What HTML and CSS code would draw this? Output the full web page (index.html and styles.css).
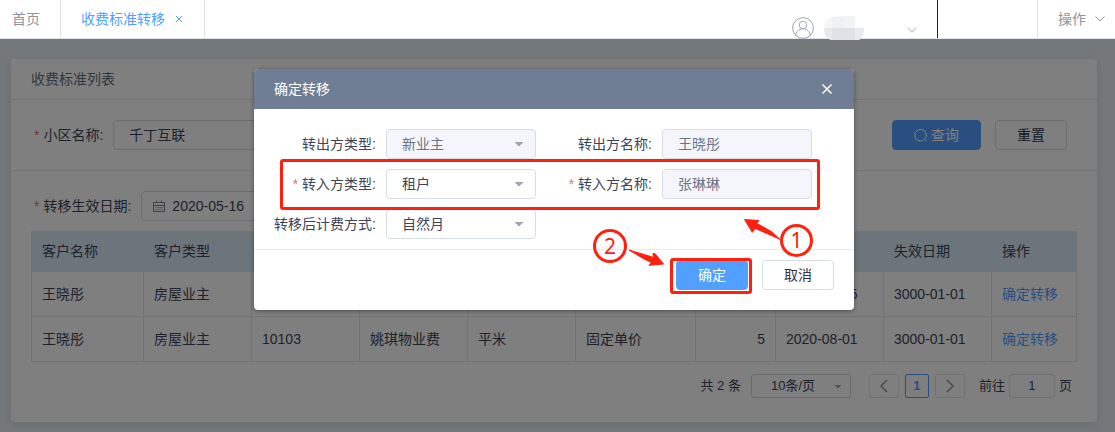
FILE: index.html
```
<!DOCTYPE html>
<html lang="zh-CN">
<head>
    <meta charset="UTF-8">
    <meta name="viewport" content="width=device-width, initial-scale=1.0">
    <title>收费标准转移</title>
    <link rel="stylesheet" href="styles.css">
</head>
<body>
    <header class="topbar">
        <nav class="tabs">
            <a class="tab" href="#">首页</a>
            <a class="tab active" href="#">收费标准转移
                <svg class="tab-close" width="8" height="8" viewBox="0 0 8 8"><path d="M1 1l6 6M7 1L1 7"/></svg>
            </a>
        </nav>
        <div class="user">
            <svg class="avatar" width="24" height="22" viewBox="0 0 24 22">
                <circle cx="12" cy="11" r="10.4"/>
                <circle cx="12" cy="8" r="3.8"/>
                <path d="M4.500 19c.4-4.600 3.500-7.200 7.500-7.200s7.100 2.600 7.500 7.200"/>
            </svg>
            <svg class="user-name" width="40" height="24" viewBox="0 0 40 24">
                <path d="M0 12C0 4 5 0 14 0h17v12z" fill="#f6f6f7"/>
                <path d="M8 1h12v11H8z" fill="#f0f1f3"/>
                <path d="M20 0h11v12H20z" fill="#f2f3f5"/>
                <path d="M0 12h40c0 6-2 10-5 12H7c-5-2-7-6-7-12z" fill="#e9eaed"/>
                <path d="M8 12h12v12H8zM20 12h11v12H20z" fill="#e0e2e7"/>
            </svg>
            <svg class="chevron light" width="10" height="6" viewBox="0 0 10 6"><path d="M1 1l4 4 4-4"/></svg>
        </div>
        <div class="spacer"></div>
        <button class="operate">操作
            <svg class="chevron" width="10" height="6" viewBox="0 0 10 6"><path d="M.5.500l4.500 4.500L9.500.5"/></svg>
        </button>
    </header>

    <main>
        <section class="card">
            <h1 class="card-title">收费标准列表</h1>

            <form class="search">
                <label class="required" for="community">小区名称:</label>
                <input class="field wide" type="text" id="community" value="千丁互联">
                <div class="search-buttons">
                    <button class="btn primary query" type="button">
                        <svg width="14" height="14" viewBox="0 0 14 14"><path d="M9.500 12.200A5.800 5.800 0 1 1 11.300 10.500M10 10.500l2.500 2.700"/></svg>查询
                    </button>
                    <button class="btn" type="button">重置</button>
                </div>
            </form>

            <div class="effective">
                <label class="required" for="effectiveDate">转移生效日期:</label>
                <div class="date-field">
                    <svg width="12" height="12" viewBox="0 0 12 12"><path d="M.5 2.500h11v9H.5zM.5 5.500h11M3.500.5v2M8.500.5v2"/><path d="M2.500 7.500h7M2.500 9.500h7" stroke-dasharray="1 1"/></svg>
                    <input type="text" id="effectiveDate" value="2020-05-16">
                </div>
            </div>

            <table class="list">
                <colgroup>
                    <col class="c-name"><col><col><col><col><col class="c-type"><col class="c-price"><col><col><col class="c-action">
                </colgroup>
                <thead>
                    <tr>
                        <th>客户名称</th><th>客户类型</th><th></th><th></th><th></th><th></th><th></th><th></th><th>失效日期</th><th>操作</th>
                    </tr>
                </thead>
                <tbody>
                    <tr>
                        <td>王晓彤</td><td>房屋业主</td><td></td><td></td><td></td><td></td><td></td><td>2020-05-15</td><td>3000-01-01</td><td><a href="#">确定转移</a></td>
                    </tr>
                    <tr>
                        <td>王晓彤</td><td>房屋业主</td><td>10103</td><td>姚琪物业费</td><td>平米</td><td>固定单价</td><td class="num">5</td><td>2020-08-01</td><td>3000-01-01</td><td><a href="#">确定转移</a></td>
                    </tr>
                </tbody>
            </table>

            <div class="pagination">
                <span class="total">共 2 条</span>
                <select class="page-size" aria-label="每页条数"><option>10条/页</option></select>
                <button class="page-btn arrow" aria-label="上一页"><svg width="8" height="14" viewBox="0 0 8 14"><path d="M7 1L1 7l6 6"/></svg></button>
                <button class="page-btn current">1</button>
                <button class="page-btn arrow" aria-label="下一页"><svg width="8" height="14" viewBox="0 0 8 14"><path d="M1 1l6 6-6 6"/></svg></button>
                <label class="goto" for="pageNo">前往</label>
                <input class="page-no" type="text" id="pageNo" value="1">
                <span>页</span>
            </div>
        </section>

        <div class="overlay">
            <div class="modal" role="dialog" aria-labelledby="modalTitle">
                <div class="modal-header">
                    <h2 id="modalTitle">确定转移</h2>
                    <button class="modal-close" aria-label="关闭"><svg width="12" height="12" viewBox="0 0 12 12"><path d="M1.500 1.500l9 9M10.500 1.500l-9 9"/></svg></button>
                </div>
                <div class="modal-body">
                    <label for="outType">转出方类型:</label>
                    <select class="field" id="outType" disabled><option>新业主</option></select>
                    <label for="outName">转出方名称:</label>
                    <input class="field" type="text" id="outName" value="王晓彤" disabled>

                    <label class="required" for="inType">转入方类型:</label>
                    <select class="field" id="inType"><option>租户</option></select>
                    <label class="required" for="inName">转入方名称:</label>
                    <input class="field" type="text" id="inName" value="张琳琳" disabled>

                    <label for="billing">转移后计费方式:</label>
                    <select class="field" id="billing"><option>自然月</option></select>
                </div>
                <div class="modal-footer">
                    <button class="btn primary">确定</button>
                    <button class="btn">取消</button>
                </div>

                <!-- Step markers -->
                <svg class="marks" width="600" height="241" viewBox="0 0 600 241">
                    <rect x="27.500" y="91.500" width="537" height="48" rx="1.500"/>
                    <rect x="417.500" y="190.500" width="79" height="33" rx="1.500"/>
                    <circle cx="542.500" cy="171.500" r="15"/>
                    <circle cx="356" cy="177" r="15.500"/>
                    <path d="M490.500 150.500L505 151.500 502.700 154.300 517.700 162.700 526 170.300 506 161.500 501.500 159.500 498.300 163.300z"/>
                    <path d="M375 181L396 187.300 399.500 188.500 399 184.500 401 184.500 409.500 195 395 196.300 397.300 193.500 390 190z"/>
                    <text x="542.500" y="179">1</text>
                    <text x="356" y="185">2</text>
                </svg>
            </div>
        </div>
    </main>
</body>
</html>
```
FILE: styles.css
```
* {
    box-sizing: border-box;
}

body {
    margin: 0;
    min-height: 100vh;
    display: flex;
    flex-direction: column;
    font-family: "Liberation Sans", "Noto Sans CJK SC", sans-serif;
    font-size: 14px;
    line-height: 20px;
    color: #3d4459;
    background-color: #e9f1f6;
}

button,
input,
select {
    font: inherit;
    color: inherit;
}

button {
    cursor: pointer;
}

a {
    color: #519fff;
    text-decoration: none;
}

svg {
    fill: none;
    stroke: currentColor;
}

/* Top bar */
.topbar {
    position: relative;
    z-index: 1; /* keeps the user name above the overlay */
    display: flex;
    height: 39px;
    background-color: #fff;
    border-bottom: 1px solid #dde3e8;
}

.tabs {
    display: flex;
    flex: 1;
}

.tab {
    display: flex;
    align-items: center;
    padding: 0 20px 0 12px;
    color: #8f949c;
    border-right: 1px solid #dfe2ea;
}

.tab.active {
    padding: 0 21px 0 20px;
    color: #519fff;
}

.tab-close {
    margin-left: 10px;
}

.user {
    display: flex;
    align-items: flex-end;
    width: 147px;
    border-right: 1px solid #17232f;
}

.avatar {
    margin-bottom: -1px;
    color: #a0a5b1;
}

.user-name {
    margin: 0 43px -2px 9px;
    stroke: none;
}

.chevron {
    color: #8f99a6;
}

.chevron.light {
    margin-bottom: 5px;
    color: #c6d0da;
    stroke-width: 1.5;
}

.spacer {
    width: 100px;
    border-right: 1px solid #dfe2ea;
}

.operate {
    display: flex;
    align-items: center;
    gap: 9px;
    width: 77px;
    padding: 0 0 0 20px;
    border: none;
    background: none;
    color: #8f949c;
}

/* Page content */
main {
    position: relative;
    flex: 1;
    padding: 20px 18px 10px 11px;
}

.card {
    padding-bottom: 24px;
    background-color: #fff;
    border-radius: 4px;
    box-shadow: 0 2px 10px rgba(60, 80, 100, 0.15);
}

.card-title {
    margin: 0;
    padding: 10px 20px;
    border-bottom: 1px solid #e8e8e8;
    font-size: 14px;
    font-weight: normal;
    color: #666f80;
}

.search {
    display: flex;
    align-items: center;
    padding: 20px 30px 20px 23px;
    border-bottom: 1px solid #e8e8e8;
}

.required::before {
    content: "*";
    margin-right: 4px;
    color: #f56c6c;
}

.field {
    width: 100%;
    height: 30px;
    padding: 0 15px;
    border: 1px solid #d5dde5;
    border-radius: 4px;
    background-color: #fff;
}

input.field {
    padding-bottom: 2px;
}

.field.wide {
    width: 270px;
    margin-left: 10px;
}

.field:disabled {
    background-color: #f4f6fb;
    color: #6b7488;
    opacity: 1;
}

select {
    appearance: none;
}

/* Down triangle: left half, then right half */
select.field,
.page-size {
    background-image: linear-gradient(to bottom left, #a0a6b0 50%, transparent 52%), linear-gradient(to bottom right, #a0a6b0 50%, transparent 52%);
    background-position: right 16px center, right 12px center;
    background-size: 4px 4px;
    background-repeat: no-repeat;
}

.search-buttons {
    display: flex;
    gap: 14px;
    margin-left: auto;
}

.btn {
    height: 30px;
    min-width: 72px;
    padding: 0 16px;
    border: 1px solid #d5dde5;
    border-radius: 4px;
    background-color: #fff;
    color: #2f3445;
}

.btn.primary {
    border-color: #519fff;
    background-color: #519fff;
    color: #fff;
}

.btn.query {
    display: flex;
    align-items: center;
    justify-content: center;
    gap: 3px;
    padding: 0 21px;
}

.effective {
    display: flex;
    align-items: center;
    padding: 20px 23px 10px;
}

.date-field {
    display: flex;
    align-items: center;
    gap: 7px;
    width: 220px;
    height: 30px;
    margin-left: 10px;
    padding: 0 11px;
    border: 1px solid #d5dde5;
    border-radius: 4px;
}

.date-field svg {
    color: #7a8294;
}

.date-field input {
    flex: 1;
    min-width: 0;
    padding: 0;
    border: none;
    background: none;
}

/* Table */
.list {
    width: calc(100% - 40px);
    margin: 0 20px;
    border-collapse: collapse;
    table-layout: fixed;
}

.c-name {
    width: 112px;
}

.c-type {
    width: 120px;
}

.c-price {
    width: 80px;
}

.c-action {
    width: 85px;
}

.list th,
.list td {
    height: 45px;
    padding: 0 10px;
    border: 1px solid #e4e6ee;
    text-align: left;
    font-weight: normal;
    white-space: nowrap;
}

.list th {
    height: 40px;
    padding-bottom: 2px;
    background-color: #d9eaf7;
}

.list .num {
    text-align: right;
}

/* Pagination */
.pagination {
    display: flex;
    align-items: center;
    justify-content: flex-end;
    height: 24px;
    margin: 12px 25px 0;
    font-size: 13px;
}

.page-size {
    width: 100px;
    height: 24px;
    margin: 0 18px 0 10px;
    padding: 0 19px;
    border: 1px solid #cfd5dd;
    border-radius: 3px;
    background-color: #fff;
    background-position: right 12px center, right 9px center;
    background-size: 3px 3px;
}

.page-btn {
    display: flex;
    align-items: center;
    justify-content: center;
    width: 24px;
    height: 24px;
    padding: 0;
    border: 1px solid #519fff;
    border-radius: 2px;
    background-color: #fff;
    color: #519fff;
    font-weight: bold;
}

.page-btn.arrow {
    width: 30px;
    border-color: #e1e4ec;
    color: #8f949c;
    stroke-width: 1.5;
}

.page-btn.current {
    margin: 0 6px;
}

.goto {
    margin-left: 14px;
}

.page-no {
    width: 46px;
    height: 24px;
    margin: 0 4px;
    padding: 0 0 2px;
    border: 1px solid #e1e4ec;
    border-radius: 3px;
    text-align: center;
}

/* Dialog */
.overlay {
    position: absolute;
    inset: 0;
    display: flex;
    justify-content: center;
    align-items: flex-start;
    padding: 30px 7px 0 0;
    background-color: rgba(0, 0, 0, 0.5);
}

.modal {
    position: relative;
    width: 600px;
    border-radius: 4px;
    background-color: #fff;
    box-shadow: 0 1px 4px rgba(0, 0, 0, 0.4);
}

.modal-header {
    display: flex;
    align-items: center;
    justify-content: space-between;
    height: 40px;
    padding: 0 21px 0 20px;
    border-radius: 4px 4px 0 0;
    background-color: #707e95;
    color: #fff;
}

.modal-header h2 {
    margin: 0;
    font-size: 14px;
    font-weight: normal;
}

.modal-close {
    display: flex;
    padding: 0;
    border: none;
    background: none;
}

.modal-close svg {
    stroke-width: 1.5;
}

.modal-body {
    display: grid;
    grid-template-columns: 122px 150px 106px 150px;
    grid-auto-rows: 30px;
    align-items: center;
    justify-content: start;
    column-gap: 10px;
    row-gap: 10px;
    padding: 20px 0 10px;
    border-bottom: 1px solid #e8eaee;
}

.modal-body label {
    text-align: right;
}

.modal-footer {
    display: flex;
    justify-content: flex-end;
    gap: 14px;
    padding: 10px 20px 20px;
}

.marks {
    position: absolute;
    top: 0;
    left: 0;
    pointer-events: none;
    stroke: #ff2010;
    stroke-width: 3;
}

.marks path {
    fill: #ff2010;
    stroke-width: 1;
}

.marks text {
    fill: #ff2010;
    stroke: none;
    font-family: "Noto Sans", sans-serif;
    font-size: 21px;
    text-anchor: middle;
}
```
